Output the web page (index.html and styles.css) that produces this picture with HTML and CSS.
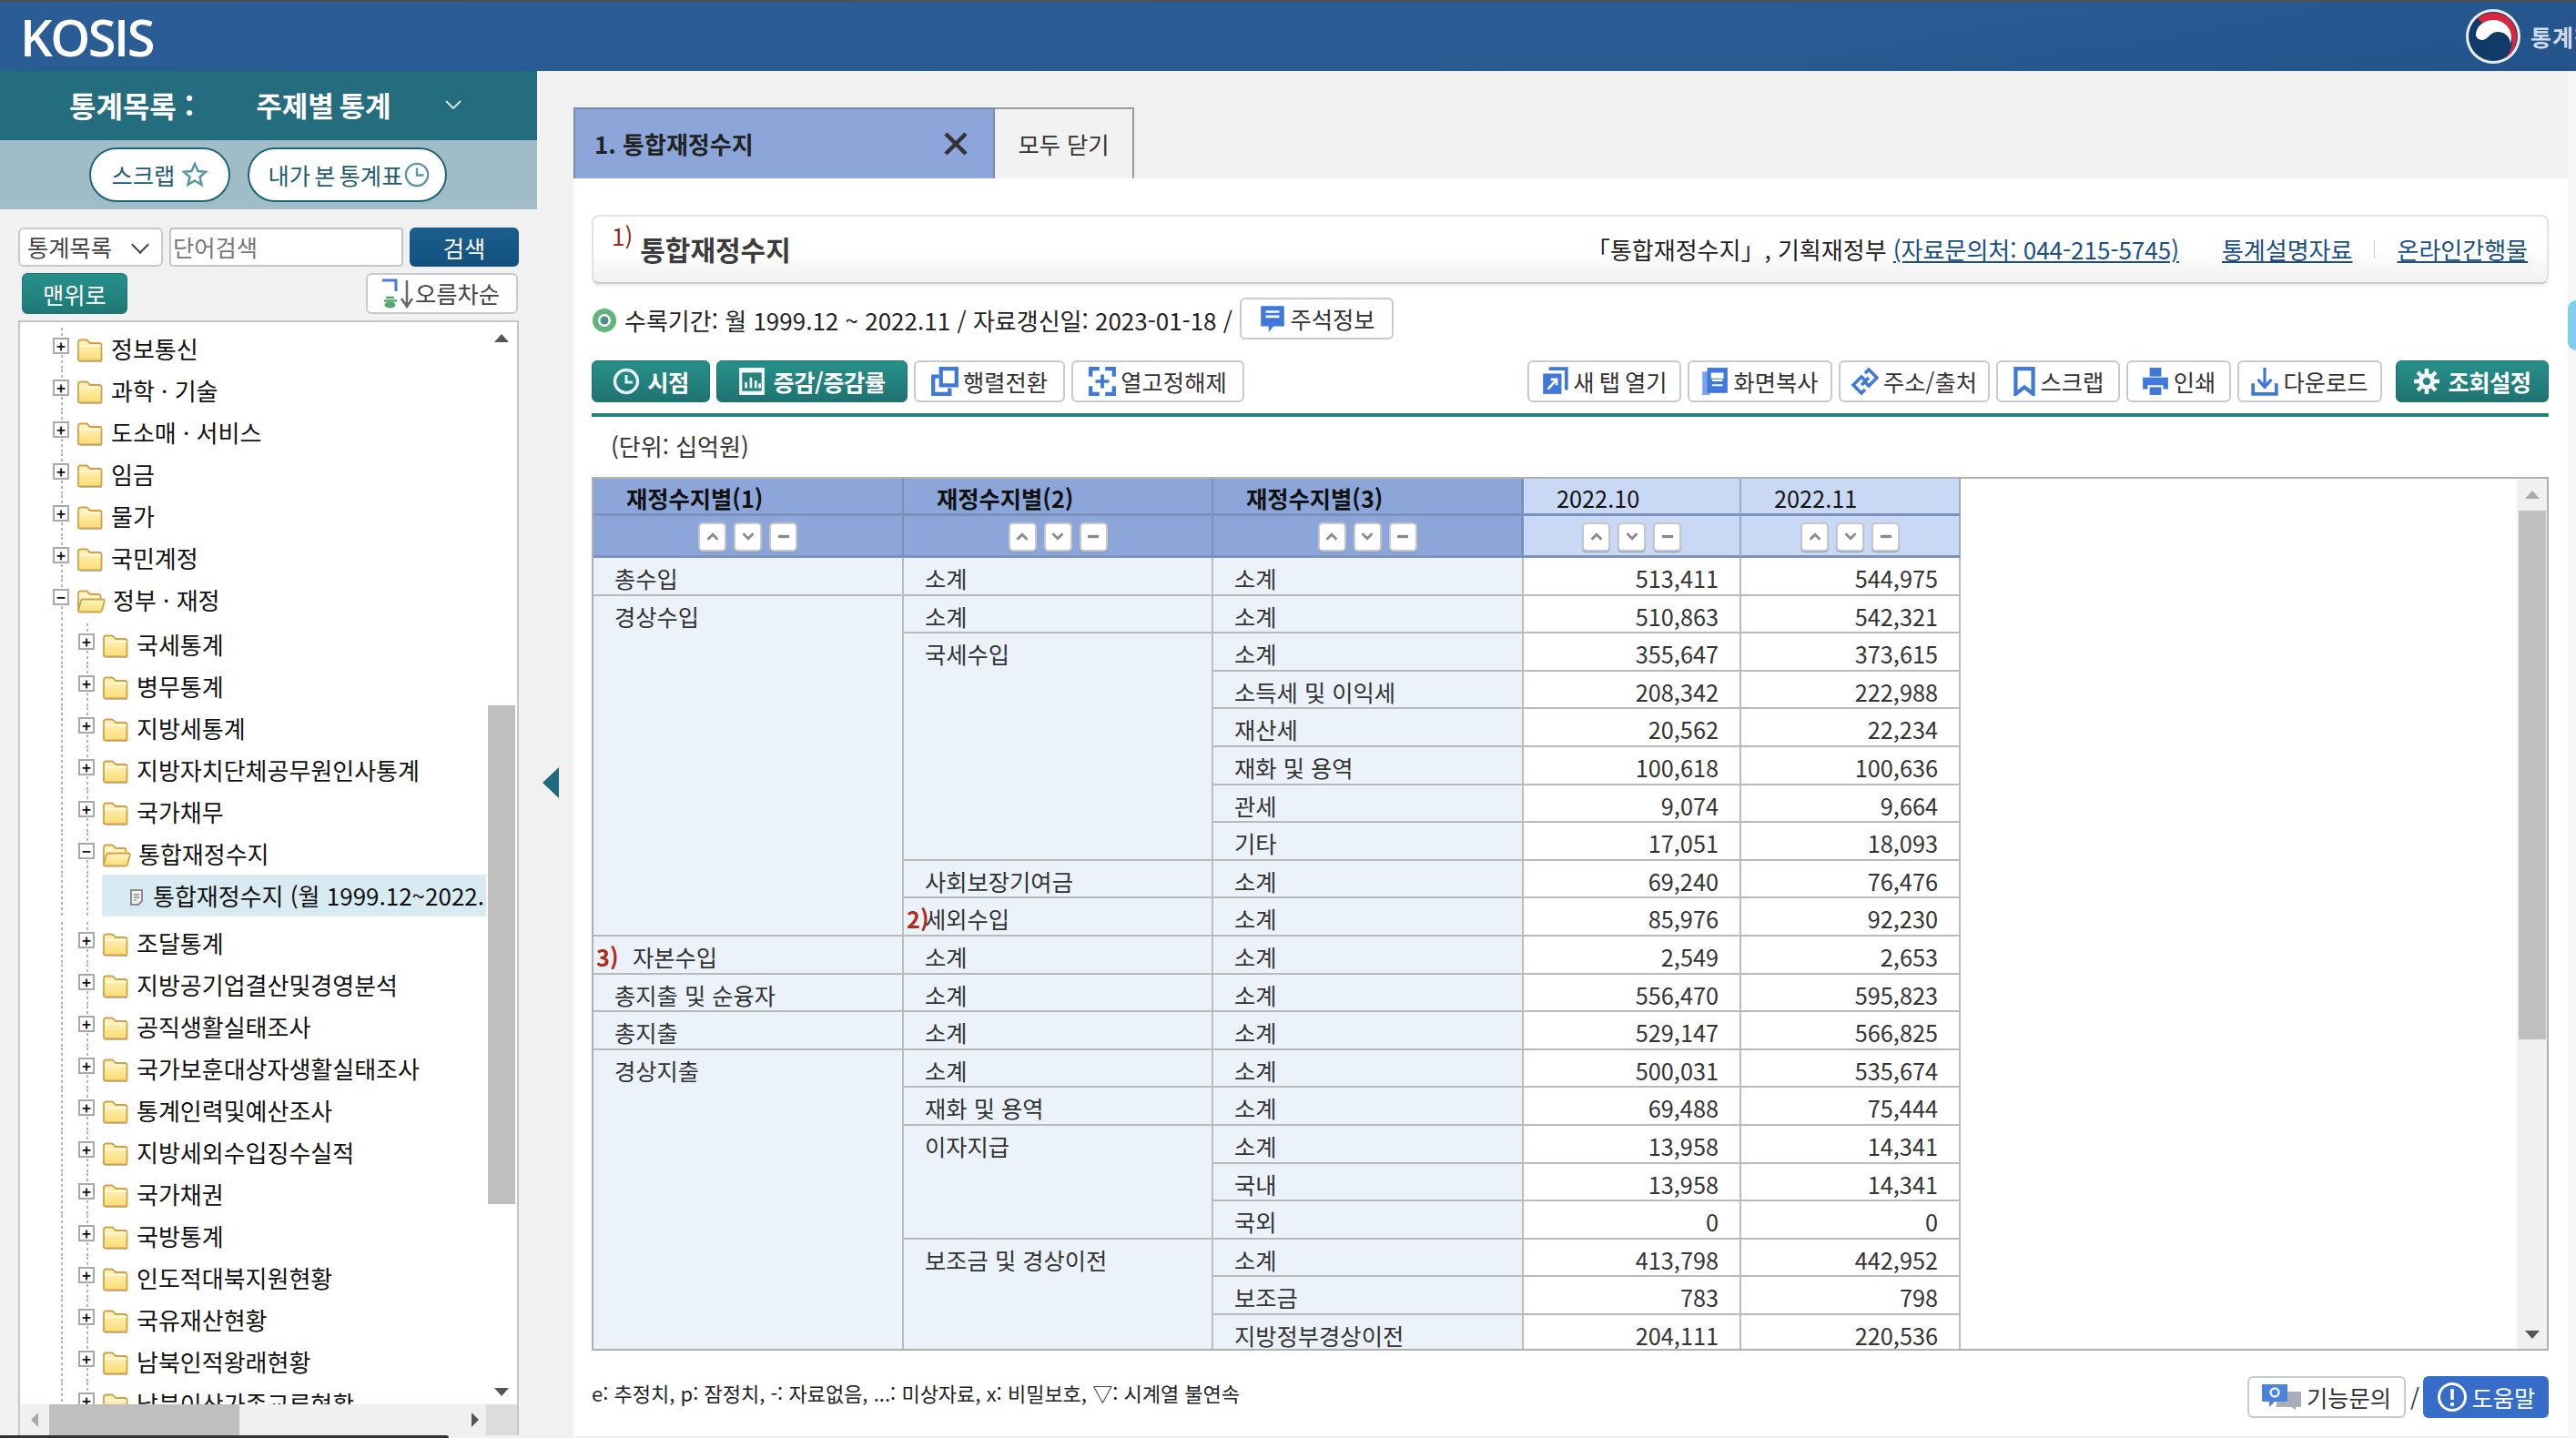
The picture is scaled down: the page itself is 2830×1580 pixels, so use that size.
FILE: index.html
```html
<!DOCTYPE html>
<html lang="ko">
<head>
<meta charset="utf-8">
<title>KOSIS 통합재정수지</title>
<link rel="stylesheet" href="styles.css">
</head>
<body>
<svg class="sprite" aria-hidden="true">
  <defs>
    <linearGradient id="fy" x1="0" y1="0" x2="0" y2="1"><stop offset="0" stop-color="#fff6c4"/><stop offset="1" stop-color="#f9dc74"/></linearGradient>
    <symbol id="folder" viewBox="0 0 30 27">
      <path d="M2 24V5c0-1.500 1-2.500 2.500-2.500h7L15 6h10c1.500 0 2.500 1 2.500 2.500V24c0 1-.8 1.500-1.800 1.500H3.800C2.800 25.500 2 25 2 24z" fill="url(#fy)" stroke="#d3a04a" stroke-width="1.800"/>
      <path d="M3 9h24" stroke="#fffbe6" stroke-width="1.500"/>
      <path d="M4 26.500h24" stroke="#bbb" stroke-width="1"/>
    </symbol>
    <symbol id="folderopen" viewBox="0 0 32 27">
      <path d="M2 24V5c0-1.500 1-2.500 2.500-2.500h7L15 6h9c1.500 0 2.500 1 2.500 2.500V11" fill="#fff6c6" stroke="#d3a04a" stroke-width="1.800"/>
      <path d="M2 24l3-11c.3-1 1-1.500 2-1.500h22c1.300 0 2 .8 1.700 2L28 24c-.3 1-1 1.500-2 1.500H3.800C2.500 25.500 1.800 25 2 24z" fill="url(#fy)" stroke="#d3a04a" stroke-width="1.800"/>
    </symbol>
    <symbol id="doc" viewBox="0 0 16 18">
      <path d="M2 1h12v12l-4 4H2z" fill="#f0f0f0" stroke="#8c8c8c" stroke-width="2"/>
      <path d="M5 6h6M5 9h6M5 12h3" stroke="#8c8c8c" stroke-width="1.500"/>
    </symbol>
    <symbol id="up" viewBox="0 0 14 10"><path d="M2 8l5-5 5 5" fill="none" stroke="#8a8a8a" stroke-width="2.500"/></symbol>
    <symbol id="down" viewBox="0 0 14 10"><path d="M2 2l5 5 5-5" fill="none" stroke="#8a8a8a" stroke-width="2.500"/></symbol>
    <symbol id="minus" viewBox="0 0 14 10"><path d="M1.500 5h11" fill="none" stroke="#8a8a8a" stroke-width="3"/></symbol>
  </defs>
</svg>

<header class="topbar">
  <span class="logo">KOSIS</span>
  <div class="org">
    <svg class="emblem" viewBox="0 0 62 62">
      <circle cx="31" cy="31" r="30" fill="#e8edf3"/>
      <circle cx="31" cy="31" r="27" fill="#123a68"/>
      <path d="M14 11c5-4 11-6 17-6 15 0 26 12 26 26 0 11-6 20-14 25 6-6 9-13 9-20 0-10-7-19-20-19-7 0-13 2-18-6z" fill="#d8273f"/>
      <path d="M12 29c0-9 9-16 19-16 11 0 20 8 20 19 0 3-.5 5-1 7 0-7-6-13-14-13-5 0-8 3-11 6-2 2-4 3-6 3-4 0-7-3-7-6z" fill="#fff"/>
    </svg>
    <span class="org-name">통계청</span>
  </div>
</header>

<div class="page">
  <aside class="sidebar">
    <div class="side-head">
      <span class="side-title">통계목록 :</span>
      <span class="side-sub">주제별 통계</span>
      <svg class="side-chev" viewBox="0 0 18 12"><path d="M1 2l8 8 8-8" fill="none" stroke="#dfeef2" stroke-width="1.800"/></svg>
    </div>
    <div class="side-pills">
      <a class="pill pill-a">스크랩
        <svg class="pill-ic" viewBox="0 0 28 28"><path d="M14 2l3.500 8 8.500.8-6.500 5.700 2 8.500-7.500-4.500L6.500 25l2-8.500L2 10.800l8.500-.8z" fill="#fff" stroke="#5b95a8" stroke-width="2.500"/></svg>
      </a>
      <a class="pill pill-b">내가 본 통계표
        <svg class="pill-ic" viewBox="0 0 30 30"><circle cx="15" cy="15" r="13" fill="#fff" stroke="#5b95a8" stroke-width="2.500"/><path d="M15 7v8.500h8" fill="none" stroke="#5b95a8" stroke-width="2.500"/></svg>
      </a>
    </div>
    <div class="side-search">
      <div class="select-wrap"><select class="select"><option>통계목록</option></select></div>
      <input class="search-input" placeholder="단어검색">
      <button class="search-btn">검색</button>
    </div>
    <div class="side-actions">
      <button class="top-btn">맨위로</button>
      <button class="sort-btn">
        <svg class="sort-ic" viewBox="0 0 36 34"><path d="M1 2h15v12" fill="none" stroke="#4a78dd" stroke-width="3"/><path d="M5 21h9M3 24.500h14" stroke="#56a86a" stroke-width="2.500"/><ellipse cx="9.500" cy="29" rx="6" ry="3.500" fill="#56a86a"/><path d="M28 2v27m-6-7l6 9 6-9" fill="none" stroke="#666" stroke-width="2.500"/></svg>
        오름차순
      </button>
    </div>
    <div class="tree-box">
      <div class="tree-view">
        <ul class="tree">
          <li class="node l1"><span class="tg">+</span><svg class="fd"><use href="#folder"/></svg><span>정보통신</span></li>
          <li class="node l1"><span class="tg">+</span><svg class="fd"><use href="#folder"/></svg><span>과학 · 기술</span></li>
          <li class="node l1"><span class="tg">+</span><svg class="fd"><use href="#folder"/></svg><span>도소매 · 서비스</span></li>
          <li class="node l1"><span class="tg">+</span><svg class="fd"><use href="#folder"/></svg><span>임금</span></li>
          <li class="node l1"><span class="tg">+</span><svg class="fd"><use href="#folder"/></svg><span>물가</span></li>
          <li class="node l1"><span class="tg">+</span><svg class="fd"><use href="#folder"/></svg><span>국민계정</span></li>
          <li class="node l1"><span class="tg">−</span><svg class="fd fo"><use href="#folderopen"/></svg><span>정부 · 재정</span></li>
          <li class="node l2 first"><span class="tg">+</span><svg class="fd"><use href="#folder"/></svg><span>국세통계</span></li>
          <li class="node l2"><span class="tg">+</span><svg class="fd"><use href="#folder"/></svg><span>병무통계</span></li>
          <li class="node l2"><span class="tg">+</span><svg class="fd"><use href="#folder"/></svg><span>지방세통계</span></li>
          <li class="node l2"><span class="tg">+</span><svg class="fd"><use href="#folder"/></svg><span>지방자치단체공무원인사통계</span></li>
          <li class="node l2"><span class="tg">+</span><svg class="fd"><use href="#folder"/></svg><span>국가채무</span></li>
          <li class="node l2"><span class="tg">−</span><svg class="fd fo"><use href="#folderopen"/></svg><span>통합재정수지</span></li>
          <li class="node leaf"><span class="leaf-sel"><svg class="doc"><use href="#doc"/></svg><span class="leaf-t">통합재정수지 (월 1999.12~2022.11)</span></span></li>
          <li class="node l2"><span class="tg">+</span><svg class="fd"><use href="#folder"/></svg><span>조달통계</span></li>
          <li class="node l2"><span class="tg">+</span><svg class="fd"><use href="#folder"/></svg><span>지방공기업결산및경영분석</span></li>
          <li class="node l2"><span class="tg">+</span><svg class="fd"><use href="#folder"/></svg><span>공직생활실태조사</span></li>
          <li class="node l2"><span class="tg">+</span><svg class="fd"><use href="#folder"/></svg><span>국가보훈대상자생활실태조사</span></li>
          <li class="node l2"><span class="tg">+</span><svg class="fd"><use href="#folder"/></svg><span>통계인력및예산조사</span></li>
          <li class="node l2"><span class="tg">+</span><svg class="fd"><use href="#folder"/></svg><span>지방세외수입징수실적</span></li>
          <li class="node l2"><span class="tg">+</span><svg class="fd"><use href="#folder"/></svg><span>국가채권</span></li>
          <li class="node l2"><span class="tg">+</span><svg class="fd"><use href="#folder"/></svg><span>국방통계</span></li>
          <li class="node l2"><span class="tg">+</span><svg class="fd"><use href="#folder"/></svg><span>인도적대북지원현황</span></li>
          <li class="node l2"><span class="tg">+</span><svg class="fd"><use href="#folder"/></svg><span>국유재산현황</span></li>
          <li class="node l2"><span class="tg">+</span><svg class="fd"><use href="#folder"/></svg><span>남북인적왕래현황</span></li>
          <li class="node l2"><span class="tg">+</span><svg class="fd"><use href="#folder"/></svg><span>남북이산가족교류현황</span></li>
        </ul>
      </div>
      <div class="tree-vbar">
        <i class="arr-up"></i>
        <i class="tree-vthumb"></i>
        <i class="arr-down push"></i>
      </div>
      <div class="tree-hbar">
        <i class="arr-left"></i>
        <i class="tree-hthumb"></i>
        <i class="arr-right"></i>
      </div>
      <div class="tree-corner"></div>
    </div>
  </aside>

  <div class="toggle"><i class="toggle-arrow"></i></div>

  <main class="main">
    <nav class="tabs">
      <div class="tab-on">
        <span>1. 통합재정수지</span>
        <svg class="tab-x" viewBox="0 0 26 26"><path d="M2 2l22 22M24 2L2 24" stroke="#333" stroke-width="4.500"/></svg>
      </div>
      <div class="tab-close">모두 닫기</div>
    </nav>
    <section class="panel">
      <div class="title-bar">
        <sup class="title-note">1)</sup>
        <h1 class="title">통합재정수지</h1>
        <div class="meta">「통합재정수지」, 기획재정부 <a class="lnk">(자료문의처: 044-215-5745)</a></div>
        <a class="lnk lnk-a">통계설명자료</a>
        <i class="meta-sep"></i>
        <a class="lnk">온라인간행물</a>
      </div>

      <div class="info-row">
        <svg class="info-ic" viewBox="0 0 28 28"><circle cx="14" cy="14" r="10" fill="#fff" stroke="#5fb47c" stroke-width="6"/><circle cx="14" cy="14" r="4.500" fill="#4c8f8a"/></svg>
        <span class="info-text">수록기간: 월 1999.12 ~ 2022.11 / 자료갱신일: 2023-01-18 /</span>
        <button class="btn w-note">
          <svg class="ic" viewBox="0 0 28 30"><path d="M2 2h24v21H15l-5 6v-6H2z" fill="#3f78d8"/><path d="M7 8h14M7 13h14" stroke="#fff" stroke-width="2.500"/></svg>
          주석정보
        </button>
      </div>

      <div class="toolbar">
        <button class="btn teal w-a"><svg class="ic" viewBox="0 0 30 30"><circle cx="15" cy="15" r="12.500" fill="none" stroke="#e4f0ef" stroke-width="3.500"/><path d="M15 8v8h7" fill="none" stroke="#e4f0ef" stroke-width="3"/></svg>시점</button>
        <button class="btn teal w-b"><svg class="ic" viewBox="0 0 28 30"><rect x="1" y="1" width="26" height="28" fill="#f2f8f7"/><rect x="4" y="6" width="20" height="19" fill="#27827e"/><path d="M8 22v-6M13 22V11M18 22v-8M22 22v-5" stroke="#f2f8f7" stroke-width="2.500"/></svg>증감/증감률</button>
        <button class="btn w-c"><svg class="ic" viewBox="0 0 28 30"><path d="M10 2h16v17H10z" fill="none" stroke="#3f78d8" stroke-width="4"/><path d="M8 10H2v18h17v-6" fill="none" stroke="#3f78d8" stroke-width="4"/></svg>행렬전환</button>
        <button class="btn w-d"><svg class="ic" viewBox="0 0 28 30"><path d="M2 10V2h9M17 2h9v8M26 20v8h-9M11 28H2v-8" fill="none" stroke="#3f78d8" stroke-width="4"/><path d="M14 8v14M7 15h14" stroke="#3f78d8" stroke-width="3.500"/></svg>열고정해제</button>
        <div class="tool-right">
          <button class="btn w-e"><svg class="ic" viewBox="0 0 28 30"><path d="M8 2h18v22" fill="none" stroke="#3f78d8" stroke-width="3.500"/><rect x="2" y="7" width="19" height="21" fill="#3f78d8"/><path d="M7 23l9-10m-6 0h6v6" fill="none" stroke="#fff" stroke-width="2.500"/></svg>새 탭 열기</button>
          <button class="btn w-f"><svg class="ic" viewBox="0 0 28 30"><rect x="1" y="5" width="8" height="24" fill="#7aa5e8"/><rect x="6" y="1" width="21" height="26" fill="#3f78d8"/><path d="M11 7h11v4H11zM11 14h11M11 19h11" fill="#fff" stroke="#fff" stroke-width="2"/></svg>화면복사</button>
          <button class="btn w-g"><svg class="ic" viewBox="0 0 30 30"><path d="M15 6l4-4 9 9-9 9-4-4M15 24l-4 4-9-9 9-9 4 4M11 19l8-8" fill="none" stroke="#3f78d8" stroke-width="3.500"/></svg>주소/출처</button>
          <button class="btn w-h"><svg class="ic ic-s" viewBox="0 0 24 30"><path d="M3 2h18v26l-9-7-9 7z" fill="none" stroke="#3f78d8" stroke-width="4"/></svg>스크랩</button>
          <button class="btn w-i"><svg class="ic" viewBox="0 0 28 30"><rect x="8" y="1" width="12" height="9" fill="#3f78d8"/><path d="M1 11h26v12h-5v-4H6v4H1z" fill="#3f78d8"/><rect x="8" y="21" width="12" height="8" fill="#3f78d8"/></svg>인쇄</button>
          <button class="btn w-j"><svg class="ic" viewBox="0 0 28 30"><path d="M14 1v20m-7-8l7 8 7-8" fill="none" stroke="#3f78d8" stroke-width="3"/><path d="M2 17v11h24V17" fill="none" stroke="#3f78d8" stroke-width="3.500"/></svg>다운로드</button>
          <button class="btn teal w-k"><svg class="ic" viewBox="0 0 30 30"><circle cx="15" cy="15" r="6.500" fill="none" stroke="#f2f8f7" stroke-width="5"/><path d="M15 1v6M15 23v6M1 15h6M23 15h6M5 5l4.500 4.500M20.500 20.500L25 25M25 5l-4.500 4.500M9.500 20.500L5 25" stroke="#f2f8f7" stroke-width="4.500"/></svg>조회설정</button>
        </div>
      </div>

      <div class="unit">(단위: 십억원)</div>

      <div class="grid-box">
        <div class="grid-view">
          <table class="data">
            <colgroup><col class="c-1"><col class="c-2"><col class="c-3"><col class="c-4"><col class="c-5"></colgroup>
            <thead>
              <tr class="hr1">
                <th class="dim">재정수지별(1)</th><th class="dim">재정수지별(2)</th><th class="dim last">재정수지별(3)</th>
                <th class="per">2022.10</th><th class="per">2022.11</th>
              </tr>
              <tr class="hr2">
                <th class="dim"><div class="sorts"><b><svg><use href="#up"/></svg></b><b><svg><use href="#down"/></svg></b><b><svg><use href="#minus"/></svg></b></div></th>
                <th class="dim"><div class="sorts"><b><svg><use href="#up"/></svg></b><b><svg><use href="#down"/></svg></b><b><svg><use href="#minus"/></svg></b></div></th>
                <th class="dim last"><div class="sorts"><b><svg><use href="#up"/></svg></b><b><svg><use href="#down"/></svg></b><b><svg><use href="#minus"/></svg></b></div></th>
                <th class="per"><div class="sorts"><b><svg><use href="#up"/></svg></b><b><svg><use href="#down"/></svg></b><b><svg><use href="#minus"/></svg></b></div></th>
                <th class="per"><div class="sorts"><b><svg><use href="#up"/></svg></b><b><svg><use href="#down"/></svg></b><b><svg><use href="#minus"/></svg></b></div></th>
              </tr>
            </thead>
            <tbody>
              <tr><td class="k">총수입</td><td class="k">소계</td><td class="k">소계</td><td class="n">513,411</td><td class="n">544,975</td></tr>
              <tr><td class="k" rowspan="9">경상수입</td><td class="k">소계</td><td class="k">소계</td><td class="n">510,863</td><td class="n">542,321</td></tr>
              <tr><td class="k" rowspan="6">국세수입</td><td class="k">소계</td><td class="n">355,647</td><td class="n">373,615</td></tr>
              <tr><td class="k">소득세 및 이익세</td><td class="n">208,342</td><td class="n">222,988</td></tr>
              <tr><td class="k">재산세</td><td class="n">20,562</td><td class="n">22,234</td></tr>
              <tr><td class="k">재화 및 용역</td><td class="n">100,618</td><td class="n">100,636</td></tr>
              <tr><td class="k">관세</td><td class="n">9,074</td><td class="n">9,664</td></tr>
              <tr><td class="k">기타</td><td class="n">17,051</td><td class="n">18,093</td></tr>
              <tr><td class="k">사회보장기여금</td><td class="k">소계</td><td class="n">69,240</td><td class="n">76,476</td></tr>
              <tr><td class="k"><span class="note">2)</span>세외수입</td><td class="k">소계</td><td class="n">85,976</td><td class="n">92,230</td></tr>
              <tr><td class="k"><span class="note note-w">3)</span>자본수입</td><td class="k">소계</td><td class="k">소계</td><td class="n">2,549</td><td class="n">2,653</td></tr>
              <tr><td class="k">총지출 및 순융자</td><td class="k">소계</td><td class="k">소계</td><td class="n">556,470</td><td class="n">595,823</td></tr>
              <tr><td class="k">총지출</td><td class="k">소계</td><td class="k">소계</td><td class="n">529,147</td><td class="n">566,825</td></tr>
              <tr><td class="k" rowspan="8">경상지출</td><td class="k">소계</td><td class="k">소계</td><td class="n">500,031</td><td class="n">535,674</td></tr>
              <tr><td class="k">재화 및 용역</td><td class="k">소계</td><td class="n">69,488</td><td class="n">75,444</td></tr>
              <tr><td class="k" rowspan="3">이자지급</td><td class="k">소계</td><td class="n">13,958</td><td class="n">14,341</td></tr>
              <tr><td class="k">국내</td><td class="n">13,958</td><td class="n">14,341</td></tr>
              <tr><td class="k">국외</td><td class="n">0</td><td class="n">0</td></tr>
              <tr><td class="k" rowspan="3">보조금 및 경상이전</td><td class="k">소계</td><td class="n">413,798</td><td class="n">442,952</td></tr>
              <tr><td class="k">보조금</td><td class="n">783</td><td class="n">798</td></tr>
              <tr><td class="k">지방정부경상이전</td><td class="n">204,111</td><td class="n">220,536</td></tr>
            </tbody>
          </table>
        </div>
        <div class="grid-vbar">
          <i class="arr-up light"></i>
          <i class="grid-vthumb"></i>
          <i class="arr-down push"></i>
        </div>
      </div>

      <footer class="foot">
        <span class="legend">e: 추정치, p: 잠정치, -: 자료없음, ...: 미상자료, x: 비밀보호, ▽: 시계열 불연속</span>
        <button class="btn w-q"><svg class="ic ic-q" viewBox="0 0 44 28"><path d="M16 8h27v17h-6v3l-5-3H16z" fill="#a9afba"/><path d="M0 0h28v19H14l-6 6v-6H0z" fill="#4a82dc"/><circle cx="14" cy="9" r="4.500" fill="none" stroke="#e8f0fb" stroke-width="2.500"/></svg>기능문의</button>
        <span class="slash">/</span>
        <button class="btn help"><svg class="ic ic-h" viewBox="0 0 34 34"><circle cx="17" cy="17" r="14.500" fill="none" stroke="#fff" stroke-width="3"/><path d="M17 8v12" stroke="#fff" stroke-width="3.500"/><circle cx="17" cy="25" r="2.200" fill="#fff"/></svg>도움말</button>
      </footer>
    </section>
  </main>
  <div class="edge"><i class="edge-blob"></i></div>
</div>
<div class="taskbar"></div>
</body>
</html>
```
FILE: styles.css
```css
* { box-sizing: border-box; }
html, body { margin: 0; padding: 0; }
body {
  width: 2830px;
  height: 1580px;
  overflow: hidden;
  background: #f1f1f1;
  color: #222;
  font-family: "Noto Sans CJK KR", "Noto Sans", sans-serif;
  font-size: 25.3px;
  line-height: 1.2;
  position: relative;
}
button, input, select { font: inherit; }
.sprite { width: 0; height: 0; position: absolute; }

/* header */
.topbar {
  height: 78px;
  border-top: 2px solid #4c5056;
  background: linear-gradient(170deg, #2a5c95 0%, #2a5c93 60%, #24538b 100%);
  display: flex;
  align-items: center;
  overflow: hidden;
}
.logo {
  font-family: "Open Sans", sans-serif;
  font-weight: 600;
  font-size: 56px;
  letter-spacing: -2.500px;
  color: #fff;
  margin-left: 22px;
  line-height: 1;
}
.org { margin-left: auto; display: flex; align-items: center; width: 122px; flex: none; }
.emblem { width: 62px; height: 62px; flex: none; }
.org-name { font-size: 25px; font-weight: 700; color: #cfdbe9; margin-left: 10px; white-space: nowrap; letter-spacing: 1px; }

.page { display: flex; height: 1502px; }

/* sidebar */
.sidebar { width: 590px; flex: none; display: flex; flex-direction: column; }
.side-head {
  height: 76px;
  background: #236d7f;
  color: #fff;
  display: flex;
  align-items: center;
  font-size: 32px;
  font-weight: 700;
  padding: 0 0 2px 76px;
}
.side-sub { margin-left: 68px; font-size: 31px; word-spacing: -3px; }
.side-chev { width: 18px; height: 12px; margin-left: 60px; }
.side-pills {
  height: 76px;
  background: #a0bdc7;
  display: flex;
  align-items: center;
  padding-left: 98px;
  gap: 19px;
}
.pill {
  height: 60px;
  border: 2px solid #1f6579;
  border-radius: 30px;
  background: #fff;
  color: #1f5d70;
  display: flex;
  align-items: center;
  justify-content: center;
  gap: 8px;
}
.pill-a { width: 155px; }
.pill-b { width: 219px; gap: 2px; word-spacing: -3px; padding-left: 4px; }
.pill-ic { width: 28px; height: 30px; }

.side-search { display: flex; margin: 20px 20px 0; gap: 7px; height: 43px; }
.select-wrap { width: 159px; position: relative; }
.select-wrap::after {
  content: "";
  position: absolute;
  right: 18px;
  top: 12px;
  width: 12px;
  height: 12px;
  border-right: 2px solid #444;
  border-bottom: 2px solid #444;
  transform: rotate(45deg);
}
.select {
  width: 100%;
  height: 100%;
  appearance: none;
  background: #fff;
  border: 2px solid #c9c9c9;
  border-radius: 6px;
  padding: 0 0 0 8px;
  color: #444;
}
.search-input {
  width: 257px;
  border: 2px solid #c4c4c4;
  border-radius: 4px;
  background: #fff;
  padding: 0 2px;
  outline: 0;
}
.search-input::placeholder { color: #777; opacity: 1; }
.search-btn {
  width: 120px;
  border: 0;
  border-radius: 6px;
  background: linear-gradient(#1c5f8e, #11507d);
  color: #fff;
  padding: 2px 0 0;
}
.side-actions { display: flex; justify-content: space-between; margin: 7px 21px 0 24px; height: 45px; }
.top-btn {
  width: 116px;
  border: 1px solid #1f7674;
  border-radius: 6px;
  background: linear-gradient(#27908a, #1f7876);
  color: #fff;
  padding: 2px 0 0;
}
.sort-btn {
  width: 167px;
  border: 2px solid #c6cad2;
  border-radius: 6px;
  background: #fff;
  color: #444;
  display: flex;
  align-items: center;
  padding: 0 0 0 15px;
  white-space: nowrap;
}
.sort-ic { width: 36px; height: 34px; flex: none; margin-right: 1px; }

.tree-box {
  margin: 7px 20px 0;
  height: 1225px;
  border: 2px solid #c6c6c6;
  border-bottom: 0;
  background: #fff;
  display: grid;
  grid-template-columns: 512px 34px;
  grid-template-rows: 1189px 34px;
}
.tree-view { overflow: hidden; font-size: 26px; }
.tree { list-style: none; margin: 0; padding: 6px 0 0; width: 512px; }
.node {
  height: 46px;
  display: flex;
  align-items: center;
  color: #111;
  white-space: nowrap;
  background-repeat: repeat-y;
  background-size: 2px 6px;
}
.l1 {
  padding-left: 36px;
  background-image: linear-gradient(#b5b5b5 50%, transparent 50%);
  background-position: 45px 0;
}
.l2 {
  padding-left: 64px;
  background-image: linear-gradient(#b5b5b5 50%, transparent 50%), linear-gradient(#b5b5b5 50%, transparent 50%);
  background-position: 45px 0, 73px 0;
  background-size: 2px 6px, 2px 6px;
}
.first { margin-top: 3px; }
.tg {
  width: 18px;
  height: 18px;
  flex: none;
  border: 2px solid #a8a8a8;
  background: #fff;
  font-size: 17px;
  font-weight: 700;
  line-height: 13px;
  text-align: center;
  color: #111;
  margin: -6px 8px 0 0;
  position: relative;
}
.fd { width: 30px; height: 27px; flex: none; margin: 2px 8px 0 0; }
.fo { width: 32px; height: 27px; margin-right: 8px; }
.leaf {
  padding-left: 90px;
  margin-bottom: 6px;
  background-image: linear-gradient(#b5b5b5 50%, transparent 50%), linear-gradient(#b5b5b5 50%, transparent 50%);
  background-position: 45px 0, 73px 0;
  background-size: 2px 6px, 2px 6px;
}
.leaf-sel {
  width: 422px;
  height: 46px;
  background: #d8eaf2;
  display: flex;
  align-items: center;
  padding-left: 30px;
  overflow: hidden;
}
.doc { width: 16px; height: 18px; flex: none; margin: 4px 10px 0 0; }
.leaf-t { white-space: nowrap; }

.tree-vbar {
  position: relative;
  display: flex;
  flex-direction: column;
  align-items: center;
  padding: 13px 0 9px;
  background: #fff;
}
.tree-vthumb { width: 30px; height: 548px; background: #bfbfbf; margin-top: 399px; }
.push { margin-top: auto; }
.arr-up, .arr-down, .arr-left, .arr-right { display: block; width: 0; height: 0; flex: none; }
.arr-up { border: 8px solid transparent; border-top: 0; border-bottom: 9px solid #555; }
.arr-up.light { border-bottom-color: #a9a9a9; }
.arr-down { border: 8px solid transparent; border-bottom: 0; border-top: 9px solid #555; }
.arr-left { border: 8px solid transparent; border-left: 0; border-right: 8px solid #a9a9a9; }
.arr-right { border: 8px solid transparent; border-right: 0; border-left: 8px solid #555; }
.tree-hbar {
  background: #f0f0f0;
  display: flex;
  align-items: center;
  padding: 0 8px 0 12px;
}
.tree-hthumb { width: 209px; height: 34px; background: #bfbfbf; margin-left: 12px; margin-right: auto; }
.tree-corner { background: #dcdcdc; }

/* collapse toggle */
.toggle { width: 40px; flex: none; display: flex; align-items: flex-start; padding: 765px 0 0 6px; }
.toggle-arrow { width: 0; height: 0; border: 17px solid transparent; border-left: 0; border-right: 18px solid #21697f; display: block; }

/* main */
.main { width: 2191px; flex: none; padding-top: 40px; }
.tabs { display: flex; height: 78px; }
.tab-on {
  width: 463px;
  background: #8ca6d9;
  border: 2px solid #7a8bab;
  border-bottom: 0;
  display: flex;
  align-items: center;
  justify-content: space-between;
  padding: 0 28px 0 21px;
  font-weight: 700;
  font-size: 26px;
  color: #222;
}
.tab-x { width: 26px; height: 26px; }
.tab-close {
  width: 153px;
  background: #f2f2f2;
  border: 2px solid #999;
  border-left: 0;
  border-bottom: 0;
  display: flex;
  align-items: center;
  justify-content: center;
  color: #333;
}
.panel {
  height: 1382px;
  background: #fff;
  padding: 40px 21px 0 20px;
}
.title-bar {
  height: 76px;
  border: 2px solid #e4e4e4;
  border-bottom-color: #ccc;
  border-radius: 8px;
  background: linear-gradient(#fff 50%, #f1f1f1);
  box-shadow: 0 3px 3px #eee;
  display: flex;
  align-items: center;
  padding: 0 21px 0 20px;
  font-size: 26px;
}
.title-note { font-size: 26px; font-weight: 400; color: #8c2e20; align-self: flex-start; margin: 5px 8px 0 0; line-height: 1.2; }
.title { font-size: 30px; font-weight: 700; color: #3c3c3c; margin: 0 0 2px; line-height: 1.2; }
.meta { margin-left: auto; margin-right: 47px; color: #222; white-space: nowrap; }
.lnk { color: #1a4f85; text-decoration: underline; white-space: nowrap; }
.meta-sep { width: 1px; height: 20px; background: #ccc; margin: 0 24px; }

.info-row { display: flex; align-items: center; height: 46px; margin-top: 15px; font-size: 26px; }
.info-ic { width: 28px; height: 28px; flex: none; margin: 4px 8px 0 0; }
.info-text { white-space: nowrap; margin-right: 8px; padding-top: 4px; }

.btn {
  height: 46px;
  flex: none;
  border: 2px solid #c6cad2;
  border-radius: 6px;
  background: #fff;
  color: #333;
  display: flex;
  align-items: center;
  justify-content: center;
  gap: 5px;
  padding: 0;
  white-space: nowrap;
  font-size: 25.3px;
}
.teal {
  border: 1px solid #1f6d6e;
  background: linear-gradient(#27908a, #1f7372);
  color: #fff;
  font-weight: 700;
  gap: 8px;
  letter-spacing: -.5px;
}
.ic { width: 30px; height: 32px; flex: none; }
.ic-s { width: 26px; }
.ic-q { width: 44px; height: 28px; }
.ic-h { width: 34px; height: 34px; }
.toolbar {
  display: flex;
  gap: 7px;
  margin-top: 23px;
  height: 62px;
  padding-bottom: 12px;
  border-bottom: 4px solid #27827e;
}
.tool-right { display: flex; gap: 7px; margin-left: auto; }
.w-note { width: 169px; }
.w-a { width: 130px; }
.w-b { width: 210px; }
.w-c { width: 166px; }
.w-d { width: 190px; }
.w-e { width: 169px; word-spacing: -2px; }
.w-f { width: 159px; }
.w-g { width: 166px; }
.w-h { width: 136px; }
.w-i { width: 115px; }
.w-j { width: 159px; }
.w-k { width: 168px; margin-left: 8px; }

.unit { height: 66px; display: flex; align-items: center; padding-left: 21px; color: #333; font-size: 26px; padding-bottom: 3px; }

.grid-box {
  height: 960px;
  border: 2px solid #b0b0b0;
  display: flex;
  justify-content: space-between;
  background: #fff;
}
.grid-view { width: 1504px; height: 956px; overflow: hidden; }
.data { border-collapse: separate; border-spacing: 0; table-layout: fixed; width: 1502px; }
.c-1 { width: 341px; }
.c-2 { width: 340px; }
.c-3 { width: 341px; }
.c-4 { width: 239px; }
.c-5 { width: 241px; }
.data th { padding: 0; text-align: left; }
.hr1 th { height: 41px; border-bottom: 3px solid #7b92bd; padding-top: 4px; padding-left: 36px; }
.hr1 .per { padding-left: 36px; }
.hr2 th { height: 46px; border-bottom: 3px solid #7b92bd; padding-top: 2px; }
.dim { background: #8ca6d9; border-right: 2px solid #7b92bd; color: #111; font-weight: 700; }
.dim.last { border-right-width: 3px; }
.per { background: #c9d9f5; border-right: 2px solid #9aaccd; color: #111; font-weight: 400; }
.sorts { display: flex; justify-content: center; gap: 8px; }
.sorts b {
  width: 31px;
  height: 32px;
  border: 2px solid #c4c8ce;
  border-radius: 5px;
  background: #fff;
  box-shadow: 0 1px 1px #8a9ab5;
  display: flex;
  align-items: center;
  justify-content: center;
}
.sorts svg { width: 16px; height: 11px; }
tbody tr { height: 42px; }
tbody tr:nth-child(5n+2), tbody tr:nth-child(5n+4) { height: 41px; }
.data td {
  border-bottom: 2px solid #b9b9b9;
  border-right: 2px solid #bdbdbd;
  padding: 5px 0 0;
  white-space: nowrap;
  color: #333;
  vertical-align: top;
  line-height: 34px;
}
.k { background: #ebf2f9; padding-left: 23px !important; }
.n { background: #fff; text-align: right; padding-right: 23px !important; }
.note { color: #b12a1a; font-weight: 700; margin-left: -20px; display: inline-block; width: 20px; }
.note-w { margin-right: 20px; }

.grid-vbar {
  width: 33px;
  background: #f0f0f0;
  display: flex;
  flex-direction: column;
  align-items: center;
  padding: 13px 0 11px;
}
.grid-vthumb { width: 30px; height: 581px; background: #bfbfbf; margin-top: 13px; }

.foot { display: flex; align-items: center; margin-top: 28px; height: 46px; }
.legend { font-size: 22px; margin-right: auto; margin-bottom: 10px; color: #222; white-space: nowrap; }
.w-q { width: 174px; }
.slash { margin: 0 4px 0 5px; color: #333; }
.help { width: 138px; background: #356dc8; border: 0; color: #fff; }

.edge { width: 9px; flex: none; background: #f7f7f7; padding-top: 252px; }
.edge-blob { display: block; width: 9px; height: 55px; background: #7fd0ee; border-radius: 9px 0 0 9px; }
.taskbar { position: absolute; left: 0; bottom: 0; width: 493px; height: 3px; background: #333; border-radius: 0 4px 0 0; }
```
